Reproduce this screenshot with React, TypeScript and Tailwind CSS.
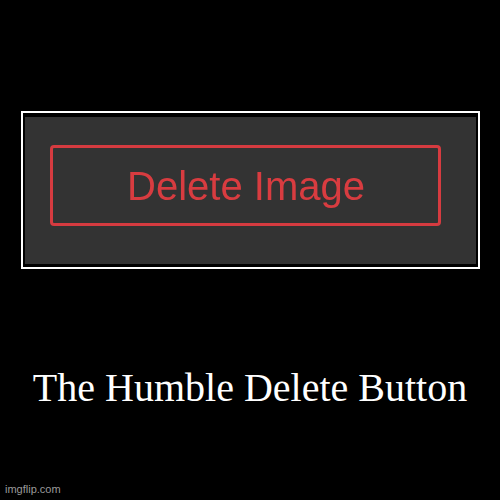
export default function App() {
  return (
    <div className="relative w-[500px] h-[500px] bg-black overflow-hidden flex flex-col pt-[111px]">
      {/* framed picture */}
      <div className="ml-[21px] w-[459px] h-[158px] border-2 border-white bg-black pt-[4px] pl-[2px] pr-[2px] pb-[3px]">
        <div className="w-full h-full bg-[#333333] pt-[28px] pl-[25px]">
          <div className="w-[391px] h-[81px] border-[3px] border-[#d63b40] rounded-[4px] flex items-center justify-center blur-[0.4px]">
            <span
              className="text-[40px] leading-none text-[#d83c40] pl-[1px]"
              style={{ fontFamily: '"Liberation Sans", Arial, sans-serif' }}
            >
              Delete Image
            </span>
          </div>
        </div>
      </div>

      {/* caption */}
      <div
        className="mt-[99px] text-center text-white text-[40px] leading-none"
        style={{ fontFamily: '"Liberation Serif", "Times New Roman", serif' }}
      >
        The Humble Delete Button
      </div>

      {/* watermark */}
      <div
        className="absolute left-[5px] bottom-[5px] text-[11px] leading-none text-[#9a9a9a]"
        style={{ fontFamily: '"Liberation Sans", Arial, sans-serif' }}
      >
        imgflip.com
      </div>
    </div>
  );
}
